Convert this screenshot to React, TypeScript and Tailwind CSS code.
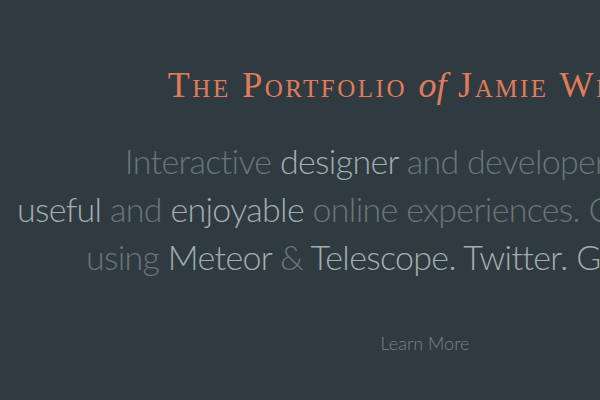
import React from 'react';

const dim = 'text-[#68767a]';
const lit = 'text-[#a3adb0]';

const App: React.FC = () => {
  return (
    <div className="w-[600px] h-[400px] overflow-hidden bg-[#2f3b40]">
      <div className="w-[850px] flex flex-col items-center pt-[67px]">
        <h1
          className="text-[36px] leading-[36px] tracking-[0.07em] text-[#e27b5b] [font-variant:small-caps] whitespace-nowrap"
          style={{ fontFamily: '"Liberation Serif", serif' }}
        >
          The Portfolio <span className="italic normal-case [font-variant:normal] tracking-normal">of</span> Jamie Wilson
        </h1>

        <p
          className="mt-[34px] text-center text-[34px] leading-[48px] tracking-[-0.02em] font-light whitespace-nowrap"
          style={{ fontFamily: 'Lato, sans-serif' }}
        >
          <span className={dim}>Interactive </span>
          <span className={lit}>designer</span>
          <span className={dim}> and developer creating</span>
          <br />
          <span className={lit}>useful</span>
          <span className={dim}> and </span>
          <span className={lit}>enjoyable</span>
          <span className={dim}> online experiences. Currently hacking</span>
          <br />
          <span className={dim}>using </span>
          <span className={lit}>Meteor</span>
          <span className={dim}> &amp; </span>
          <span className={lit}>Telescope. Twitter. GitHub. Blog.</span>
        </p>

        <a
          href="#"
          className="mt-[50px] text-[18px] leading-[24px] text-[#778386] font-light"
          style={{ fontFamily: 'Lato, sans-serif' }}
        >
          Learn More
        </a>
      </div>
    </div>
  );
};

export default App;
